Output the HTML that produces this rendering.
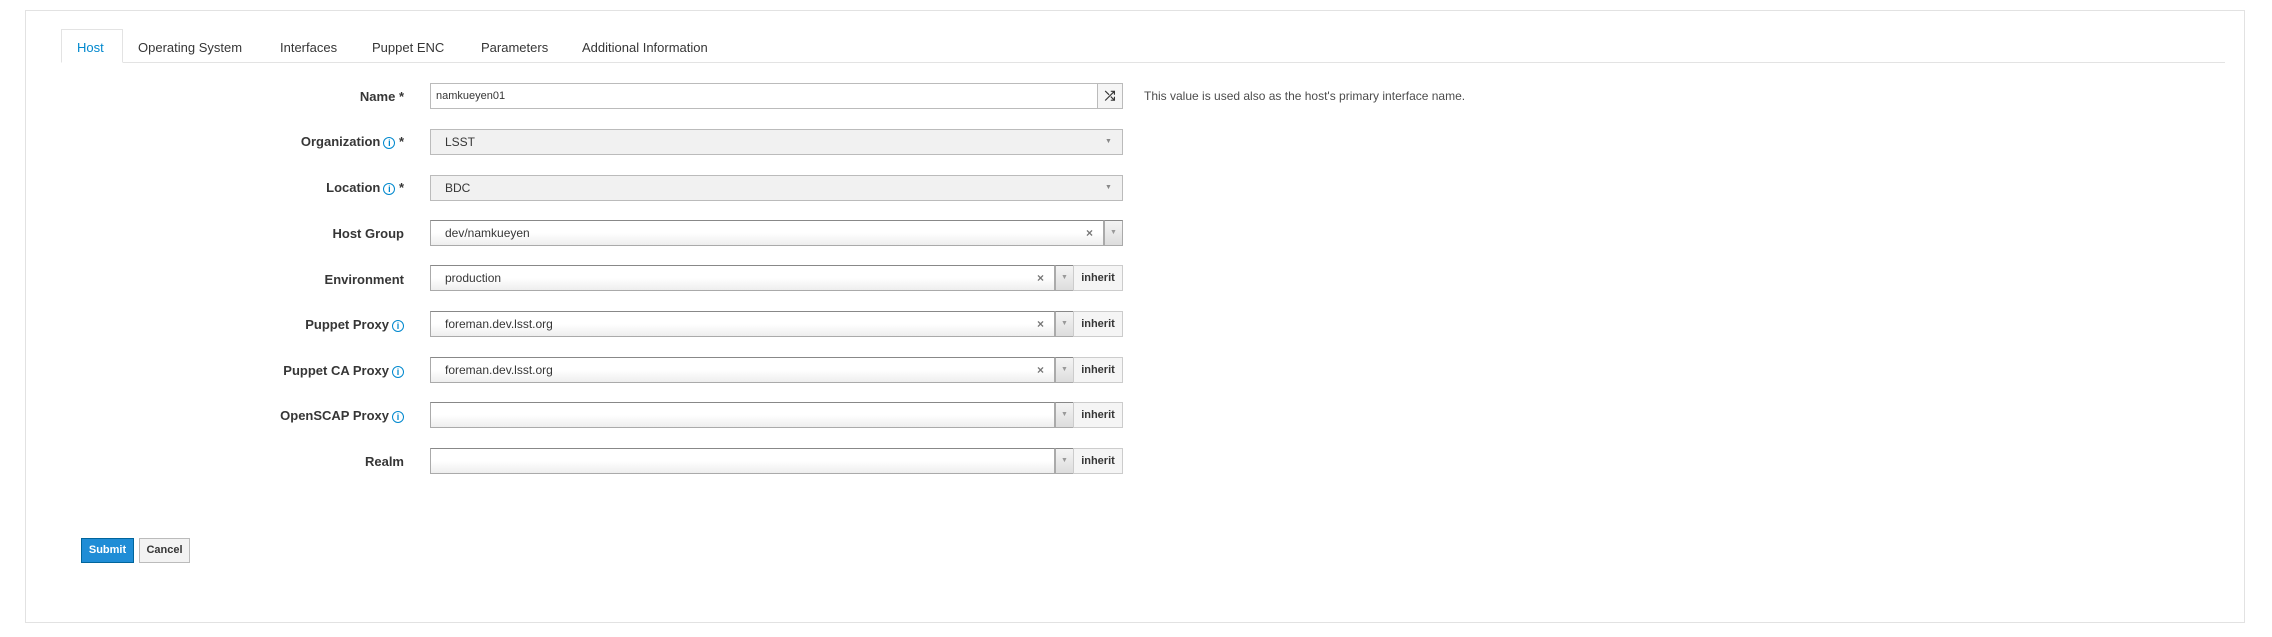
<!DOCTYPE html>
<html><head><meta charset="utf-8"><style>
*{box-sizing:border-box}
body{margin:0;width:2272px;height:637px;background:#fff;font-family:"Liberation Sans",sans-serif;color:#363636;position:relative;overflow:hidden}
.panel{position:absolute;left:25px;top:10px;width:2220px;height:613px;border:1px solid #e2e2e2}
.tabline{position:absolute;left:61px;top:62px;width:2164px;height:1px;background:#e3e3e3}
.tab{position:absolute;top:40px;font-size:13px;color:#363636}
.hosttab{position:absolute;left:61px;top:29px;width:62px;height:34px;border:1px solid #e3e3e3;border-bottom:1px solid #fff;background:#fff}
.lbl{position:absolute;right:1868px;font-size:13px;font-weight:bold;color:#363636;white-space:nowrap;line-height:16px}
.info{display:inline-block;width:12px;height:12px;border:1.3px solid #0088ce;border-radius:50%;color:#0088ce;font-size:9px;line-height:10px;text-align:center;font-weight:bold;vertical-align:0px;margin-left:3px}
.box{position:absolute;left:430px;height:26px;border:1px solid #bbb;font-size:12px;line-height:24px;padding-left:14px;color:#363636}
.s2{border:1px solid #aaa;border-top-color:#888;background:linear-gradient(#fff 0,#fff 50%,#eee 100%)}
.x{position:absolute;font-size:12px;color:#777;font-weight:bold;top:5px;line-height:14px}
.arr{position:absolute;top:-1px;height:26px;width:19px;border:1px solid #aaa;border-top-color:#888;background:linear-gradient(#f4f4f4,#ddd);color:#999;font-size:7px;text-align:center;line-height:24px}
.inh{position:absolute;left:1073px;width:50px;height:26px;border:1px solid #ccc;background:#f5f5f5;font-size:11px;font-weight:bold;line-height:24px;text-align:center;color:#363636}
</style></head><body>
<div class="panel"></div>
<div class="tabline"></div>
<div class="hosttab"></div>
<div class="tab" style="left:77px;color:#0088ce">Host</div>
<div class="tab" style="left:138px">Operating System</div>
<div class="tab" style="left:280px">Interfaces</div>
<div class="tab" style="left:372px">Puppet ENC</div>
<div class="tab" style="left:481px">Parameters</div>
<div class="tab" style="left:582px">Additional Information</div>

<div class="lbl" style="top:89px">Name *</div>
<div class="box" style="top:83px;width:668px;padding-left:5px;font-size:11px">namkueyen01</div>
<div style="position:absolute;left:1097px;top:83px;width:26px;height:26px;border:1px solid #bbb;background:#f5f5f5;font-size:13px;text-align:center;line-height:24px;font-weight:bold">⤮</div>
<div style="position:absolute;left:1144px;top:89px;font-size:12px;color:#4d4d4d">This value is used also as the host's primary interface name.</div>

<div class="lbl" style="top:134px">Organization<span class="info">i</span> *</div>
<div class="box" style="top:129px;width:693px;background:#f1f1f1">LSST<span class="x" style="left:674px;top:0;font-size:7px;color:#888;font-weight:normal;line-height:24px">▼</span></div>

<div class="lbl" style="top:180px">Location<span class="info">i</span> *</div>
<div class="box" style="top:175px;width:693px;background:#f1f1f1">BDC<span class="x" style="left:674px;top:0;font-size:7px;color:#888;font-weight:normal;line-height:24px">▼</span></div>

<div class="lbl" style="top:226px">Host Group</div>
<div class="box s2" style="top:220px;width:674px">dev/namkueyen<span class="x" style="left:655px">×</span><span class="arr" style="left:673px">▼</span></div>

<div class="lbl" style="top:272px">Environment</div>
<div class="box s2" style="top:265px;width:625px">production<span class="x" style="left:606px">×</span><span class="arr" style="left:624px">▼</span></div>
<div class="inh" style="top:265px">inherit</div>

<div class="lbl" style="top:317px">Puppet Proxy<span class="info">i</span></div>
<div class="box s2" style="top:311px;width:625px">foreman.dev.lsst.org<span class="x" style="left:606px">×</span><span class="arr" style="left:624px">▼</span></div>
<div class="inh" style="top:311px">inherit</div>

<div class="lbl" style="top:363px">Puppet CA Proxy<span class="info">i</span></div>
<div class="box s2" style="top:357px;width:625px">foreman.dev.lsst.org<span class="x" style="left:606px">×</span><span class="arr" style="left:624px">▼</span></div>
<div class="inh" style="top:357px">inherit</div>

<div class="lbl" style="top:408px">OpenSCAP Proxy<span class="info">i</span></div>
<div class="box s2" style="top:402px;width:625px"><span class="arr" style="left:624px">▼</span></div>
<div class="inh" style="top:402px">inherit</div>

<div class="lbl" style="top:454px">Realm</div>
<div class="box s2" style="top:448px;width:625px"><span class="arr" style="left:624px">▼</span></div>
<div class="inh" style="top:448px">inherit</div>

<div style="position:absolute;left:81px;top:538px;width:53px;height:25px;background:#1f8dd6;border:1px solid #00659c;color:#fff;font-size:11px;font-weight:bold;text-align:center;line-height:23px">Submit</div>
<div style="position:absolute;left:139px;top:538px;width:51px;height:25px;background:#f3f3f3;border:1px solid #bbb;color:#363636;font-size:11px;font-weight:bold;text-align:center;line-height:23px">Cancel</div>
</body></html>
